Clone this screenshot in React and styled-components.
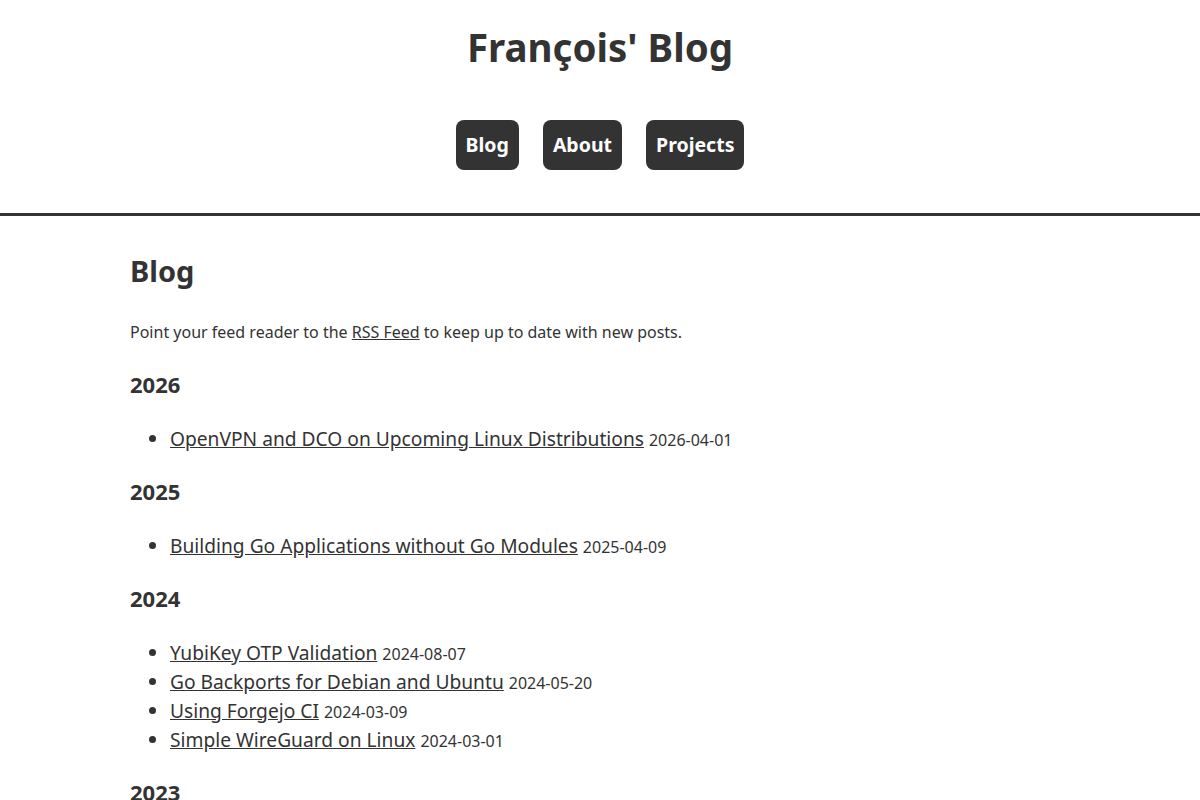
import React from 'react';
import styled, { createGlobalStyle } from 'styled-components';

const posts = [
    { year: '2026', items: [{ title: 'OpenVPN and DCO on Upcoming Linux Distributions', date: '2026-04-01' }] },
    { year: '2025', items: [{ title: 'Building Go Applications without Go Modules', date: '2025-04-09' }] },
    {
        year: '2024',
        items: [
            { title: 'YubiKey OTP Validation', date: '2024-08-07' },
            { title: 'Go Backports for Debian and Ubuntu', date: '2024-05-20' },
            { title: 'Using Forgejo CI', date: '2024-03-09' },
            { title: 'Simple WireGuard on Linux', date: '2024-03-01' },
        ],
    },
    { year: '2023', items: [] },
];

function App() {
    return (
        <>
            <Global />
            <Header>
                <SiteTitle>François' Blog</SiteTitle>
                <Nav>
                    <NavLink href="#">Blog</NavLink>
                    <NavLink href="#">About</NavLink>
                    <NavLink href="#">Projects</NavLink>
                </Nav>
            </Header>
            <Main>
                <PageTitle>Blog</PageTitle>
                <Intro>
                    Point your feed reader to the <TextLink href="#">RSS Feed</TextLink> to keep up to date with new posts.
                </Intro>
                {posts.map((group) => (
                    <section key={group.year}>
                        <Year>{group.year}</Year>
                        {group.items.length > 0 && (
                            <PostList>
                                {group.items.map((p) => (
                                    <Post key={p.title}>
                                        <PostLink href="#">{p.title}</PostLink> <PostDate>{p.date}</PostDate>
                                    </Post>
                                ))}
                            </PostList>
                        )}
                    </section>
                ))}
            </Main>
        </>
    );
}
export default App;

const Global = createGlobalStyle`
    html, body { margin:0; padding:0; background:#fff; }
    body {
        font-family:"Noto Sans", "DejaVu Sans", sans-serif;
        color:#333; font-size:16px; line-height:1.5;
    }
`
const Header = styled.header`
    display:flex; flex-direction:column; align-items:center;
    border-bottom:3px solid #333;
    padding:0 0 43px;
`
const SiteTitle = styled.h1`
    font-size:38.5px; font-weight:700;
    margin:21px 0 0; line-height:52px;
`
const Nav = styled.nav`
    display:flex; gap:24px;
    margin-top:47px;
`
const NavLink = styled.a`
    display:block;
    background:#333; color:#fff;
    font-size:19.5px; font-weight:700; line-height:30px;
    padding:10px 10px;
    border-radius:8px;
    text-decoration:none;
`
const Main = styled.main`
    max-width:940px; margin:0 auto;
    padding-top:33px;
`
const PageTitle = styled.h2`
    font-size:29px; font-weight:700;
    margin:0 0 27px; line-height:1.5;
`
const Intro = styled.p`
    margin:0 0 24px;
`
const TextLink = styled.a`
    color:#333; text-decoration:underline;
`
const Year = styled.h3`
    font-size:22px; font-weight:700;
    margin:0 0 23px; line-height:1.5;
`
const PostList = styled.ul`
    margin:0 0 22px; padding-left:40px;
`
const Post = styled.li`
    font-size:19.2px; line-height:29px;
`
const PostLink = styled.a`
    color:#333; text-decoration:underline;
`
const PostDate = styled.span`
    font-size:16px; line-height:20px;
`
